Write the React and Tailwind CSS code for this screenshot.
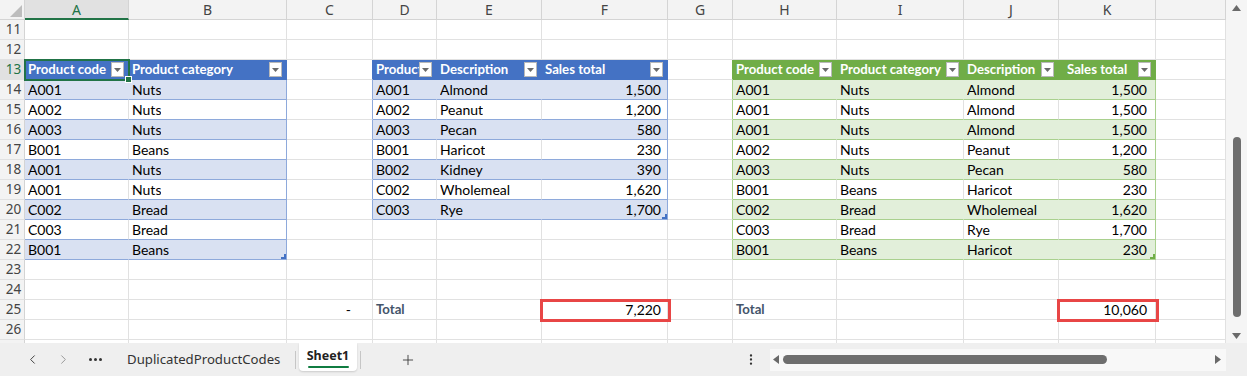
import React from "react";
import { ChevronLeft, ChevronRight, Plus, EllipsisVertical } from "lucide-react";

const WCLS = ["w-[104px]", "w-[158px]", "w-[86px]", "w-[64px]", "w-[105px]", "w-[126px]", "w-[65px]", "w-[104px]", "w-[127px]", "w-[95px]", "w-[97px]", "w-[70px]"];
const LETTERS = ["A", "B", "C", "D", "E", "F", "G", "H", "I", "J", "K", ""];

const TABLES = [
  {
    c0: 0, r0: 13, color: "b",
    heads: ["Product code", "Product category"],
    rows: [["A001", "Nuts"], ["A002", "Nuts"], ["A003", "Nuts"], ["B001", "Beans"], ["A001", "Nuts"], ["A001", "Nuts"], ["C002", "Bread"], ["C003", "Bread"], ["B001", "Beans"]],
    num: -1,
  },
  {
    c0: 3, r0: 13, color: "b",
    heads: ["Product code", "Description", "Sales total"],
    rows: [["A001", "Almond", "1,500"], ["A002", "Peanut", "1,200"], ["A003", "Pecan", "580"], ["B001", "Haricot", "230"], ["B002", "Kidney", "390"], ["C002", "Wholemeal", "1,620"], ["C003", "Rye", "1,700"]],
    num: 2,
  },
  {
    c0: 7, r0: 13, color: "g",
    heads: ["Product code", "Product category", "Description", "Sales total"],
    rows: [["A001", "Nuts", "Almond", "1,500"], ["A001", "Nuts", "Almond", "1,500"], ["A001", "Nuts", "Almond", "1,500"], ["A002", "Nuts", "Peanut", "1,200"], ["A003", "Nuts", "Pecan", "580"], ["B001", "Beans", "Haricot", "230"], ["C002", "Bread", "Wholemeal", "1,620"], ["C003", "Bread", "Rye", "1,700"], ["B001", "Beans", "Haricot", "230"]],
    num: 3,
  },
];

const STY = {
  b: {
    headBg: "bg-[#4472c4]", headBr: "border-r-[#4472c4]", headBb: "border-b-[#4472c4]",
    bandBg: "bg-[#d9e1f2]", bandBr: "border-r-[#d9e1f2]", lineBr: "border-r-[#8ea9db]", lineBb: "border-b-[#8ea9db]",
    corner: "#4472c4",
  },
  g: {
    headBg: "bg-[#70ad47]", headBr: "border-r-[#70ad47]", headBb: "border-b-[#70ad47]",
    bandBg: "bg-[#e2efda]", bandBr: "border-r-[#e2efda]", lineBr: "border-r-[#a9d08e]", lineBb: "border-b-[#a9d08e]",
    corner: "#70ad47",
  },
};

function findTable(r, c) {
  for (const t of TABLES) {
    if (c >= t.c0 && c < t.c0 + t.heads.length && r >= t.r0 && r <= t.r0 + t.rows.length) return t;
  }
  return null;
}

const EXTRA = {
  "25-2": { t: "-", align: "right", pad: "pr-[21px]" },
  "25-3": { t: "Total", total: true },
  "25-5": { t: "7,220", align: "right", pad: "pr-[6px]", box: true },
  "25-7": { t: "Total", total: true },
  "25-10": { t: "10,060", align: "right", pad: "pr-[8px]", box: true },
};

function Dropdown() {
  return (
    <span className="shrink-0 w-[13px] h-[15px] bg-white border border-[#b9b9b9] flex items-center justify-center">
      <svg width="7" height="4" viewBox="0 0 7 4"><path d="M0 0h7L3.5 4z" fill="#6a6a6a" /></svg>
    </span>
  );
}

function Cell({ r, c }) {
  const w = WCLS[c];
  const t = findTable(r, c);
  const base = "relative shrink-0 h-[20px] border-r border-b flex items-center whitespace-nowrap text-[14px] text-black";
  if (t) {
    const s = STY[t.color];
    const ci = c - t.c0;
    const last = ci === t.heads.length - 1;
    const lastRow = r === t.r0 + t.rows.length;
    if (r === t.r0) {
      const padL = t.color === "g" && ci === 3 ? "pl-[8px]" : "pl-[3px]";
      return (
        <div className={`${base} ${w} ${s.headBg} ${s.headBr} ${s.headBb} ${padL} pr-[4px]`}>
          <span className="flex-1 min-w-0 overflow-hidden text-white font-bold text-[13.2px]">{t.heads[ci]}</span>
          <Dropdown />
        </div>
      );
    }
    const band = (r - t.r0) % 2 === 1;
    const bg = band ? s.bandBg : "bg-white";
    const br = last ? s.lineBr : band ? s.bandBr : "border-r-[#e1e1e1]";
    const isNum = ci === t.num;
    const pad = isNum ? (c === 10 ? "pr-[8px] pl-[3px] justify-end" : "pr-[6px] pl-[3px] justify-end") : "px-[3px]";
    return (
      <div className={`${base} ${w} ${bg} ${br} ${s.lineBb} ${pad}`}>
        <span className="overflow-hidden">{t.rows[r - t.r0 - 1][ci]}</span>
        {last && lastRow && (
          <svg className="absolute right-0 bottom-0" width="5" height="5" viewBox="0 0 5 5">
            <path d="M5 0V5H0V3H3V0z" fill={s.corner} />
          </svg>
        )}
      </div>
    );
  }
  const nt = findTable(r, c + 1);
  let br = "border-r-[#e1e1e1]";
  if (nt) {
    const s = STY[nt.color];
    br = r === nt.r0 ? s.headBr : s.lineBr;
  }
  const ex = EXTRA[`${r}-${c}`];
  if (ex) {
    return (
      <div className={`${base} ${w} bg-white ${br} border-b-[#e1e1e1] ${ex.align === "right" ? "justify-end pl-[3px]" : "px-[3px]"} ${ex.pad || ""}`}>
        <span className={ex.total ? "font-bold text-[13.2px] text-[#44546a]" : ""}>{ex.t}</span>
        {ex.box && <div className="absolute z-10 -left-[2px] -top-[1px] -right-[4px] -bottom-[3px] border-[3px] border-[#e84646] pointer-events-none" />}
      </div>
    );
  }
  return <div className={`${base} ${w} bg-white ${br} border-b-[#e1e1e1]`} />;
}

function RowHeader({ n, sel }) {
  return (
    <div className={`shrink-0 w-[25px] h-[20px] border-r border-b border-r-[#d4d4d4] border-b-[#e1e1e1] flex items-center justify-center pl-[3px] text-[13.5px] font-['Noto_Sans',sans-serif] ${sel ? "bg-[#e1e1e1] text-[#217346]" : "bg-[#f3f3f3] text-[#444]"}`}>
      {n}
    </div>
  );
}

function Row({ n }) {
  return (
    <div className="flex shrink-0">
      <RowHeader n={n} sel={n === 13} />
      {WCLS.map((_, c) => (
        <Cell key={c} r={n} c={c} />
      ))}
    </div>
  );
}

export default function App() {
  const rows = [];
  for (let r = 11; r <= 26; r++) rows.push(r);
  return (
    <div className="w-[1247px] h-[376px] flex flex-col bg-[#efefef] overflow-hidden font-['Lato',sans-serif]">
      <div className="flex h-[343px] shrink-0">
        <div className="w-[1226px] flex flex-col overflow-hidden bg-white relative">
          <div className="flex shrink-0 h-[20px]">
            <div className="shrink-0 w-[25px] h-[20px] bg-[#f3f3f3] border-r border-b border-[#d4d4d4] relative">
              <svg className="absolute left-[10px] top-[5px]" width="12" height="12" viewBox="0 0 12 12">
                <path d="M12 0V12H0z" fill="#bdbdbd" />
              </svg>
            </div>
            {WCLS.map((w, c) => (
              <div
                key={c}
                className={`shrink-0 h-[20px] ${w} border-r border-r-[#d4d4d4] flex items-center justify-center text-[14px] font-['Noto_Sans',sans-serif] ${c === 0 ? "bg-[#e1e1e1] text-[#217346] border-b-2 border-b-[#217346]" : "bg-[#f3f3f3] text-[#444] border-b border-b-[#d4d4d4]"}`}
              >
                {LETTERS[c]}
              </div>
            ))}
          </div>
          {rows.map((r) => (
            <Row key={r} n={r} />
          ))}
          <div className="flex shrink-0 h-[3px] overflow-hidden">
            <div className="shrink-0 w-[25px] h-[3px] bg-[#f3f3f3] border-r border-[#d4d4d4]" />
            {WCLS.map((w, c) => (
              <div key={c} className={`shrink-0 h-[3px] ${w} border-r border-[#e1e1e1] bg-white`} />
            ))}
          </div>
          <div className="absolute z-20 left-[24px] top-[59px] w-[106px] h-[22px] border-2 border-[#217346] pointer-events-none">
            <div className="absolute -right-[4px] -bottom-[4px] w-[5px] h-[5px] bg-[#217346] border border-white box-content" />
          </div>
        </div>
        <div className="w-[21px] shrink-0 bg-[#f5f5f5] flex flex-col items-center">
          <svg className="mt-[5px]" width="9" height="6" viewBox="0 0 9 6"><path d="M0 6L4.5 0L9 6z" fill="#6a6a6a" /></svg>
          <div className="mt-[126px] w-[8px] h-[180px] rounded-full bg-[#6e6e6e]" />
          <svg className="mt-[16px]" width="9" height="6" viewBox="0 0 9 6"><path d="M0 0L9 0L4.5 6z" fill="#6a6a6a" /></svg>
        </div>
      </div>
      <div className="flex h-[33px] shrink-0 items-center text-[13.2px] font-['Noto_Sans',sans-serif] text-[#333]">
        <div className="ml-[17px] w-[30px] flex justify-center"><ChevronLeft size={15} strokeWidth={1.6} color="#444" /></div>
        <div className="w-[33px] flex justify-center"><ChevronRight size={15} strokeWidth={1.6} color="#9a9a9a" /></div>
        <div className="w-[30px] flex justify-center gap-[2px]">
          <span className="w-[3px] h-[3px] rounded-full bg-[#333]" />
          <span className="w-[3px] h-[3px] rounded-full bg-[#333]" />
          <span className="w-[3px] h-[3px] rounded-full bg-[#333]" />
        </div>
        <div className="ml-[17px] w-[168px] whitespace-nowrap">DuplicatedProductCodes</div>
        <div className="w-px h-[18px] bg-[#c6c6c6]" />
        <div className="ml-[3px] w-[58px] self-start h-[28px] bg-white rounded-b-[4px] shadow-[0_1px_2px_rgba(0,0,0,0.15)] flex flex-col items-center">
          <span className="mt-[3px] font-bold text-[#222] text-[12.5px] leading-[20px]">Sheet1</span>
          <span className="w-[41px] h-[2px] bg-[#107c41] rounded-full" />
        </div>
        <div className="ml-[3px] w-px h-[18px] bg-[#c6c6c6]" />
        <div className="w-[94px] flex justify-center"><Plus size={16} strokeWidth={1.3} color="#333" /></div>
        <div className="ml-[289px] w-[14px] flex justify-center"><EllipsisVertical size={15} strokeWidth={2} color="#333" /></div>
        <div className="ml-[12px] w-[456px] h-[22px] bg-[#f8f8f8] flex items-center">
          <svg className="ml-[3px]" width="6" height="9" viewBox="0 0 6 9"><path d="M6 0V9L0 4.5z" fill="#6a6a6a" /></svg>
          <div className="ml-[4px] w-[324px] h-[9px] rounded-full bg-[#6e6e6e]" />
          <svg className="ml-auto mr-[5px]" width="6" height="9" viewBox="0 0 6 9"><path d="M0 0V9L6 4.5z" fill="#6a6a6a" /></svg>
        </div>
      </div>
    </div>
  );
}
